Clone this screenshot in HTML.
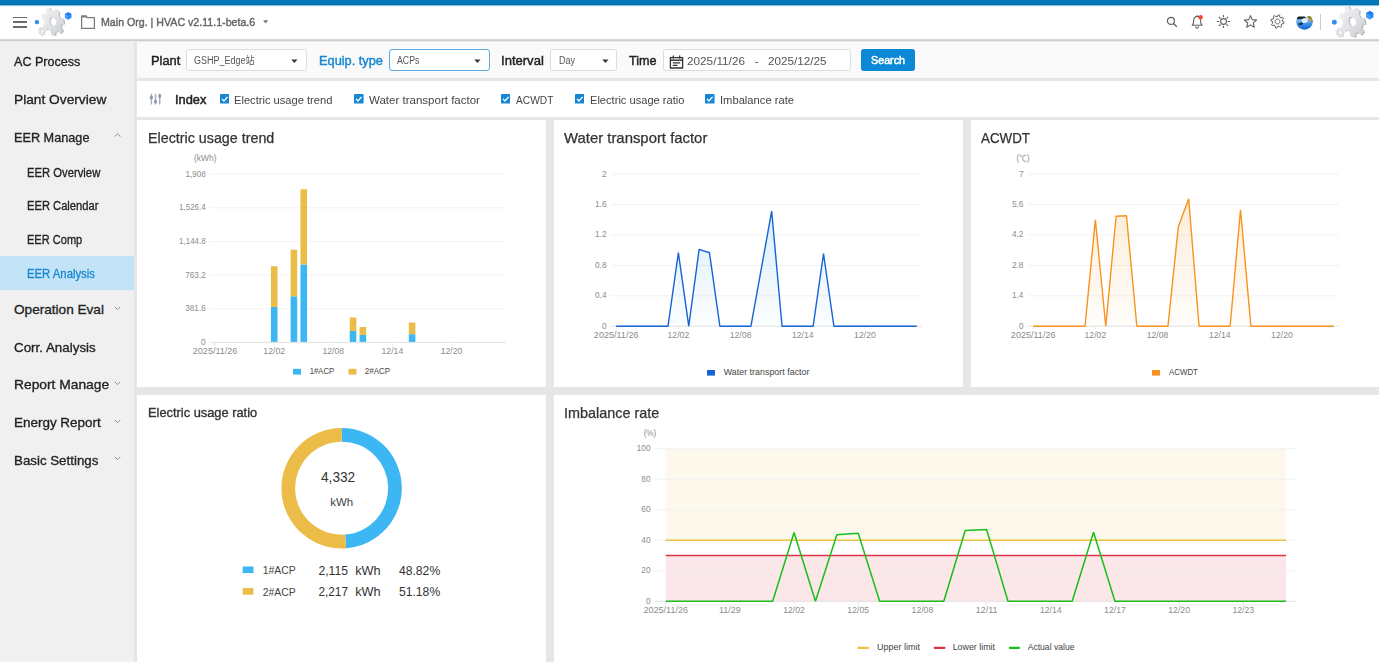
<!DOCTYPE html>
<html lang="en"><head><meta charset="utf-8"><title>HVAC - EER Analysis</title>
<style>
html,body{margin:0;padding:0}
body{width:1379px;height:662px;overflow:hidden;background:#e6e6e6;font-family:"Liberation Sans", "Noto Sans CJK TC", sans-serif;position:relative}
.t{position:absolute;white-space:nowrap;display:block}
svg text{font-family:"Liberation Sans", "Noto Sans CJK TC", sans-serif}
.blue{position:absolute;left:0;top:0;width:1379px;height:5px;background:linear-gradient(#0078b8 0,#0078b8 4px,#0071b0 4px,#0071b0 5px)}
.blue2{position:absolute;left:0;top:5px;width:1379px;height:2px;background:linear-gradient(#8ec3e0 0,#8ec3e0 1px,#f0f6fa 1px,#f0f6fa 2px)}
.hdr{position:absolute;left:0;top:5px;width:1379px;height:34px;background:#fff}
.hdrline{z-index:5;position:absolute;left:0;top:39px;width:1379px;height:3px;background:linear-gradient(#d6d6d6 0,#d6d6d6 1px,#cfcfcf 1px,#cfcfcf 2px,#e9e9e9 2px,#e9e9e9 3px)}
.hamb i{position:absolute;left:13.3px;width:13.8px;height:1.5px;background:#6a6a6a}
.side{position:absolute;left:0;top:41.4px;width:134.2px;height:622px;background:#f0f0f0}
.sel{position:absolute;left:0;width:134.2px;background:#c3e4f6}
.mi{display:contents}
.fbar{position:absolute;left:137.4px;top:41.4px;width:1242px;height:36.2px;background:#fafafa}
.ibar{position:absolute;left:137.4px;top:81px;width:1242px;height:36.1px;background:#fff}
.selbox{position:absolute;top:49px;height:22px;box-sizing:border-box;border:1px solid #dcdcdc;border-radius:3px;background:#fff}
.selbox.focus{border-color:#5aade6}
.btn{position:absolute;top:49px;height:21.5px;border-radius:3px;background:#0b89d6}
.card{position:absolute;background:#fff}
.chart{position:absolute;overflow:visible}
</style></head>
<body>
<div class="blue"></div><header><div class="hdr"></div><div class="blue2"></div><div class="hamb"><i style="top:16.5px"></i><i style="top:21.3px"></i><i style="top:26.2px"></i></div><svg class="logo" style="position:absolute;left:33.1px;top:6.3px" width="40.7" height="31.9" viewBox="0 0 46 36"><defs><linearGradient id="lgA" x1="0" y1="0" x2="1" y2="1"><stop offset="0" stop-color="#f4f4f5"/><stop offset="0.5" stop-color="#e2e3e5"/><stop offset="1" stop-color="#c9cbcf"/></linearGradient></defs><path d="M32.1 14.3 L35.4 14.8 L36.6 20.6 L33.5 21.3 L32.9 24.7 L35.2 28.2 L32.4 31.9 L29.5 29.2 L26.7 30.2 L26.3 34.0 L21.6 32.8 L21.0 28.8 L18.1 26.5 L15.3 27.8 L12.3 22.7 L14.5 20.3 L13.7 16.5 L10.6 14.4 L11.5 9.1 L14.8 10.2 L16.7 7.7 L15.6 3.7 L19.9 2.3 L21.8 6.0 L24.9 6.7 L26.7 3.9 L31.0 7.4 L30.1 10.9Z M26.2 15.6 L25.4 14.7 L24.5 14.0 L23.5 13.6 L22.6 13.5 L21.6 13.7 L20.9 14.2 L20.3 15.0 L19.9 16.0 L19.8 17.2 L20.0 18.4 L20.4 19.5 L21.0 20.6 L21.8 21.5 L22.7 22.2 L23.7 22.6 L24.6 22.7 L25.6 22.5 L26.3 22.0 L26.9 21.2 L27.3 20.2 L27.4 19.0 L27.2 17.8 L26.8 16.7Z" fill="#b4bac0" fill-rule="evenodd"/><path d="M30.8 13.7 L34.1 14.2 L35.3 20.0 L32.2 20.7 L31.6 24.1 L33.9 27.6 L31.1 31.3 L28.2 28.6 L25.4 29.6 L25.0 33.4 L20.3 32.2 L19.7 28.2 L16.8 25.9 L14.0 27.2 L11.0 22.1 L13.2 19.7 L12.4 15.9 L9.3 13.8 L10.2 8.5 L13.5 9.6 L15.4 7.1 L14.3 3.1 L18.6 1.7 L20.5 5.4 L23.6 6.1 L25.4 3.3 L29.7 6.8 L28.8 10.3Z M24.9 15.0 L24.1 14.1 L23.2 13.4 L22.2 13.0 L21.3 12.9 L20.3 13.1 L19.6 13.6 L19.0 14.4 L18.6 15.4 L18.5 16.6 L18.7 17.8 L19.1 18.9 L19.7 20.0 L20.5 20.9 L21.4 21.6 L22.4 22.0 L23.3 22.1 L24.3 21.9 L25.0 21.4 L25.6 20.6 L26.0 19.6 L26.1 18.4 L25.9 17.2 L25.5 16.1Z" fill="url(#lgA)" fill-rule="evenodd"/><path d="M13.2 27.4 L14.2 27.5 L14.5 29.4 L13.6 29.7 L13.4 30.9 L14.0 31.9 L13.1 33.1 L12.2 32.4 L11.2 32.7 L11.0 33.8 L9.4 33.5 L9.2 32.3 L8.2 31.6 L7.4 31.9 L6.4 30.3 L7.0 29.5 L6.8 28.2 L5.9 27.6 L6.2 25.9 L7.2 26.1 L7.9 25.3 L7.6 24.1 L9.0 23.6 L9.6 24.6 L10.7 24.9 L11.3 24.1 L12.8 25.2 L12.5 26.2Z M11.2 27.7 L10.9 27.4 L10.6 27.1 L10.2 27.0 L9.8 27.0 L9.5 27.1 L9.2 27.3 L8.9 27.6 L8.8 27.9 L8.7 28.4 L8.8 28.8 L8.9 29.3 L9.2 29.7 L9.5 30.0 L9.8 30.3 L10.2 30.4 L10.6 30.4 L10.9 30.3 L11.2 30.1 L11.5 29.8 L11.6 29.5 L11.7 29.0 L11.6 28.6 L11.5 28.1Z" fill="#c2c5c9" fill-rule="evenodd"/><path d="M12.7 27.2 L13.7 27.3 L14.0 29.2 L13.1 29.5 L12.9 30.7 L13.5 31.7 L12.6 32.9 L11.7 32.2 L10.7 32.5 L10.5 33.6 L8.9 33.3 L8.7 32.1 L7.7 31.4 L6.9 31.7 L5.9 30.1 L6.5 29.3 L6.3 28.0 L5.4 27.4 L5.7 25.7 L6.7 25.9 L7.4 25.1 L7.1 23.9 L8.5 23.4 L9.1 24.4 L10.2 24.7 L10.8 23.9 L12.3 25.0 L12.0 26.0Z M10.7 27.5 L10.4 27.2 L10.1 26.9 L9.7 26.8 L9.3 26.8 L9.0 26.9 L8.7 27.1 L8.4 27.4 L8.3 27.7 L8.2 28.2 L8.3 28.6 L8.4 29.1 L8.7 29.5 L9.0 29.8 L9.3 30.1 L9.7 30.2 L10.1 30.2 L10.4 30.1 L10.7 29.9 L11.0 29.6 L11.1 29.3 L11.2 28.8 L11.1 28.4 L11.0 27.9Z" fill="#e3e4e6" fill-rule="evenodd"/><path d="M6.7 19.6 L4.4 20.9 L2.1 19.6 L2.1 16.8 L4.4 15.5 L6.7 16.8Z" fill="#2b8cf4"/><path d="M43.5 13.3 L39.8 15.5 L36.1 13.3 L36.1 9.0 L39.8 6.9 L43.5 9.0Z" fill="#2b8cf4"/><path d="M39.8 11.2L36.1 9.05L39.8 6.9L43.5 9.05Z" fill="#1f7df0"/><path d="M39.8 11.2L36.1 9.05V13.35L39.8 15.5Z" fill="#4da0f8"/></svg><svg style="position:absolute;left:80px;top:14px" width="16" height="16" viewBox="0 0 16 16"><path d="M1.6 14.3V2.2h4.6l1 1.5h7.2v10.6z" fill="none" stroke="#7c7c7c" stroke-width="1.25"/><path d="M1.6 1.6h4.9l1 1.9H1.6z" fill="#7c7c7c"/></svg><span class="t " id="t0" style="font-size:11.5px;line-height:15px;top:15.32px;color:#666;-webkit-text-stroke:0.42px #666;left:101.20px;transform:scaleX(0.9243);transform-origin:0 0;">Main Org. | HVAC v2.11.1-beta.6</span><svg style="position:absolute;left:262px;top:19px" width="8" height="6" viewBox="0 0 8 6"><path d="M1 1.2h5.2L3.6 4.4z" fill="#777"/></svg><svg style="position:absolute;left:1166px;top:16px" width="12" height="12" viewBox="0 0 12 12"><circle cx="4.9" cy="4.9" r="3.5" fill="none" stroke="#606060" stroke-width="1.2"/><path d="M7.5 7.5L10.8 10.8" stroke="#606060" stroke-width="1.3"/></svg><svg style="position:absolute;left:1189.5px;top:13.5px" width="15" height="15" viewBox="0 0 15 15"><path d="M2.2 11.2c1.2-1 1.5-2.2 1.5-4.6c0-2.4 1.4-4.2 3.4-4.2s3.4 1.8 3.4 4.2c0 2.4 0.3 3.6 1.5 4.6z" fill="none" stroke="#606060" stroke-width="1.1" stroke-linejoin="round"/><path d="M5.6 12.6a1.5 1.5 0 0 0 3 0" fill="none" stroke="#606060" stroke-width="1.1"/><path d="M7.1 1.2v1.2" stroke="#606060" stroke-width="1.1"/><circle cx="10.6" cy="3.2" r="2.2" fill="#f4452f"/></svg><svg style="position:absolute;left:1215.8px;top:13.7px" width="15" height="15" viewBox="0 0 15 15"><circle cx="7.5" cy="7.5" r="2.9" fill="none" stroke="#606060" stroke-width="1.1"/><path d="M11.70 7.50L14.10 7.50M10.47 10.47L12.17 12.17M7.50 11.70L7.50 14.10M4.53 10.47L2.83 12.17M3.30 7.50L0.90 7.50M4.53 4.53L2.83 2.83M7.50 3.30L7.50 0.90M10.47 4.53L12.17 2.83" stroke="#606060" stroke-width="1.1"/></svg><svg style="position:absolute;left:1242.8px;top:13.6px" width="15" height="15" viewBox="0 0 15 15"><path d="M7.50 1.60 L9.20 5.65 L13.59 6.02 L10.26 8.90 L11.26 13.18 L7.50 10.90 L3.74 13.18 L4.74 8.90 L1.41 6.02 L5.80 5.65Z" fill="none" stroke="#606060" stroke-width="1.1" stroke-linejoin="round"/></svg><svg style="position:absolute;left:1269.7px;top:13.7px" width="15" height="15" viewBox="0 0 15 15"><path d="M12.5 7.5 L14.1 8.1 L13.7 9.8 L12.0 9.7 L11.0 11.0 L11.7 12.6 L10.2 13.5 L9.1 12.2 L7.5 12.5 L6.9 14.1 L5.2 13.7 L5.3 12.0 L4.0 11.0 L2.4 11.7 L1.5 10.2 L2.8 9.1 L2.5 7.5 L0.9 6.9 L1.3 5.2 L3.0 5.3 L4.0 4.0 L3.3 2.4 L4.8 1.5 L5.9 2.8 L7.5 2.5 L8.1 0.9 L9.8 1.3 L9.7 3.0 L11.0 4.0 L12.6 3.3 L13.5 4.8 L12.2 5.9Z M9.8 6.9 L9.6 6.3 L9.2 5.8 L8.7 5.4 L8.1 5.2 L7.5 5.1 L6.9 5.2 L6.3 5.4 L5.8 5.8 L5.4 6.3 L5.2 6.9 L5.1 7.5 L5.2 8.1 L5.4 8.7 L5.8 9.2 L6.3 9.6 L6.9 9.8 L7.5 9.9 L8.1 9.8 L8.7 9.6 L9.2 9.2 L9.6 8.7 L9.8 8.1 L9.9 7.5Z" fill="none" stroke="#606060" stroke-width="1" stroke-linejoin="round"/></svg><svg style="position:absolute;left:1295.6px;top:12.5px" width="17" height="17" viewBox="0 0 17 17"><defs><clipPath id="avc"><circle cx="8.5" cy="8.5" r="8.3"/></clipPath><linearGradient id="avg" x1="0" y1="0" x2="0" y2="1"><stop offset="0" stop-color="#ffffff"/><stop offset="0.2" stop-color="#fdfdfd"/><stop offset="0.3" stop-color="#a9cdf6"/><stop offset="0.62" stop-color="#3f92ea"/><stop offset="1" stop-color="#0d62cc"/></linearGradient><filter id="avb" x="-10%" y="-10%" width="120%" height="120%"><feGaussianBlur stdDeviation="0.45"/></filter></defs><g clip-path="url(#avc)"><rect width="17" height="17" fill="url(#avg)"/><g filter="url(#avb)"><path d="M-1 3.400h9.500l1.500 1.200l-3 1.300l-8 .600z" fill="#16222f"/><path d="M10.500 3.300h7.500v7.200c-1.800-.800-3.600-2.600-5-4.600c-.800-1.100-1.700-1.700-2.500-2.600z" fill="#7c8b2c"/><circle cx="14.600" cy="6.600" r="1.300" fill="#d8952c"/><ellipse cx="8.700" cy="7.600" rx="3" ry="2.300" fill="#f2f7fe" opacity=".9"/><path d="M2 10.900c1.200-.500 2-.400 2.600-.900l.500-.800l.700 .900c.500 .200 .900 .300 1.200 .700c-.600 .700-1.300 .900-2 1l-.400 .700l-.600-.700c-.800-.100-1.500-.400-2-.900z" fill="#121c29"/></g></g></svg><div style="position:absolute;left:1320.4px;top:14px;width:1px;height:16px;background:#ccc"></div><svg class="logo2" style="position:absolute;left:1330px;top:4px" width="46" height="36" viewBox="0 0 46 36"><defs><linearGradient id="lgA" x1="0" y1="0" x2="1" y2="1"><stop offset="0" stop-color="#f4f4f5"/><stop offset="0.5" stop-color="#e2e3e5"/><stop offset="1" stop-color="#c9cbcf"/></linearGradient></defs><path d="M32.1 14.3 L35.4 14.8 L36.6 20.6 L33.5 21.3 L32.9 24.7 L35.2 28.2 L32.4 31.9 L29.5 29.2 L26.7 30.2 L26.3 34.0 L21.6 32.8 L21.0 28.8 L18.1 26.5 L15.3 27.8 L12.3 22.7 L14.5 20.3 L13.7 16.5 L10.6 14.4 L11.5 9.1 L14.8 10.2 L16.7 7.7 L15.6 3.7 L19.9 2.3 L21.8 6.0 L24.9 6.7 L26.7 3.9 L31.0 7.4 L30.1 10.9Z M26.2 15.6 L25.4 14.7 L24.5 14.0 L23.5 13.6 L22.6 13.5 L21.6 13.7 L20.9 14.2 L20.3 15.0 L19.9 16.0 L19.8 17.2 L20.0 18.4 L20.4 19.5 L21.0 20.6 L21.8 21.5 L22.7 22.2 L23.7 22.6 L24.6 22.7 L25.6 22.5 L26.3 22.0 L26.9 21.2 L27.3 20.2 L27.4 19.0 L27.2 17.8 L26.8 16.7Z" fill="#b4bac0" fill-rule="evenodd"/><path d="M30.8 13.7 L34.1 14.2 L35.3 20.0 L32.2 20.7 L31.6 24.1 L33.9 27.6 L31.1 31.3 L28.2 28.6 L25.4 29.6 L25.0 33.4 L20.3 32.2 L19.7 28.2 L16.8 25.9 L14.0 27.2 L11.0 22.1 L13.2 19.7 L12.4 15.9 L9.3 13.8 L10.2 8.5 L13.5 9.6 L15.4 7.1 L14.3 3.1 L18.6 1.7 L20.5 5.4 L23.6 6.1 L25.4 3.3 L29.7 6.8 L28.8 10.3Z M24.9 15.0 L24.1 14.1 L23.2 13.4 L22.2 13.0 L21.3 12.9 L20.3 13.1 L19.6 13.6 L19.0 14.4 L18.6 15.4 L18.5 16.6 L18.7 17.8 L19.1 18.9 L19.7 20.0 L20.5 20.9 L21.4 21.6 L22.4 22.0 L23.3 22.1 L24.3 21.9 L25.0 21.4 L25.6 20.6 L26.0 19.6 L26.1 18.4 L25.9 17.2 L25.5 16.1Z" fill="url(#lgA)" fill-rule="evenodd"/><path d="M13.2 27.4 L14.2 27.5 L14.5 29.4 L13.6 29.7 L13.4 30.9 L14.0 31.9 L13.1 33.1 L12.2 32.4 L11.2 32.7 L11.0 33.8 L9.4 33.5 L9.2 32.3 L8.2 31.6 L7.4 31.9 L6.4 30.3 L7.0 29.5 L6.8 28.2 L5.9 27.6 L6.2 25.9 L7.2 26.1 L7.9 25.3 L7.6 24.1 L9.0 23.6 L9.6 24.6 L10.7 24.9 L11.3 24.1 L12.8 25.2 L12.5 26.2Z M11.2 27.7 L10.9 27.4 L10.6 27.1 L10.2 27.0 L9.8 27.0 L9.5 27.1 L9.2 27.3 L8.9 27.6 L8.8 27.9 L8.7 28.4 L8.8 28.8 L8.9 29.3 L9.2 29.7 L9.5 30.0 L9.8 30.3 L10.2 30.4 L10.6 30.4 L10.9 30.3 L11.2 30.1 L11.5 29.8 L11.6 29.5 L11.7 29.0 L11.6 28.6 L11.5 28.1Z" fill="#c2c5c9" fill-rule="evenodd"/><path d="M12.7 27.2 L13.7 27.3 L14.0 29.2 L13.1 29.5 L12.9 30.7 L13.5 31.7 L12.6 32.9 L11.7 32.2 L10.7 32.5 L10.5 33.6 L8.9 33.3 L8.7 32.1 L7.7 31.4 L6.9 31.7 L5.9 30.1 L6.5 29.3 L6.3 28.0 L5.4 27.4 L5.7 25.7 L6.7 25.9 L7.4 25.1 L7.1 23.9 L8.5 23.4 L9.1 24.4 L10.2 24.7 L10.8 23.9 L12.3 25.0 L12.0 26.0Z M10.7 27.5 L10.4 27.2 L10.1 26.9 L9.7 26.8 L9.3 26.8 L9.0 26.9 L8.7 27.1 L8.4 27.4 L8.3 27.7 L8.2 28.2 L8.3 28.6 L8.4 29.1 L8.7 29.5 L9.0 29.8 L9.3 30.1 L9.7 30.2 L10.1 30.2 L10.4 30.1 L10.7 29.9 L11.0 29.6 L11.1 29.3 L11.2 28.8 L11.1 28.4 L11.0 27.9Z" fill="#e3e4e6" fill-rule="evenodd"/><path d="M6.7 19.6 L4.4 20.9 L2.1 19.6 L2.1 16.8 L4.4 15.5 L6.7 16.8Z" fill="#2b8cf4"/><path d="M43.5 13.3 L39.8 15.5 L36.1 13.3 L36.1 9.0 L39.8 6.9 L43.5 9.0Z" fill="#2b8cf4"/><path d="M39.8 11.2L36.1 9.05L39.8 6.9L43.5 9.05Z" fill="#1f7df0"/><path d="M39.8 11.2L36.1 9.05V13.35L39.8 15.5Z" fill="#4da0f8"/></svg></header><div class="hdrline"></div><nav><div class="side"></div><div class="sel" style="top:256px;height:33.5px"></div><a class="mi"><span class="t " id="t1" style="font-size:13.6px;line-height:18px;top:53.21px;color:#222;-webkit-text-stroke:0.32px #222;left:14.00px;transform:scaleX(0.9249);transform-origin:0 0;">AC Process</span></a><a class="mi"><span class="t " id="t2" style="font-size:13.6px;line-height:18px;top:90.81px;color:#222;-webkit-text-stroke:0.32px #222;left:14.00px;transform:scaleX(1.0098);transform-origin:0 0;">Plant Overview</span></a><a class="mi"><span class="t " id="t3" style="font-size:13.6px;line-height:18px;top:128.51px;color:#222;-webkit-text-stroke:0.32px #222;left:14.00px;transform:scaleX(0.9332);transform-origin:0 0;">EER Manage</span></a><svg style="position:absolute;left:113.7px;top:133.1px" width="7" height="4.4" viewBox="0 0 7 4.4"><path d="M0.7 3.6L3.5 0.8L6.3 3.6" fill="none" stroke="#8c8c8c" stroke-width="1"/></svg><a class="mi"><span class="t " id="t4" style="font-size:13.6px;line-height:18px;top:301.01px;color:#222;-webkit-text-stroke:0.32px #222;left:14.00px;">Operation Eval</span></a><svg style="position:absolute;left:113.7px;top:305.6px" width="7" height="4.4" viewBox="0 0 7 4.4"><path d="M0.7 0.8L3.5 3.6L6.3 0.8" fill="none" stroke="#8c8c8c" stroke-width="1"/></svg><a class="mi"><span class="t " id="t5" style="font-size:13.6px;line-height:18px;top:338.71px;color:#222;-webkit-text-stroke:0.32px #222;left:14.00px;transform:scaleX(0.9837);transform-origin:0 0;">Corr. Analysis</span></a><a class="mi"><span class="t " id="t6" style="font-size:13.6px;line-height:18px;top:376.31px;color:#222;-webkit-text-stroke:0.32px #222;left:14.00px;transform:scaleX(1.0144);transform-origin:0 0;">Report Manage</span></a><svg style="position:absolute;left:113.7px;top:380.9px" width="7" height="4.4" viewBox="0 0 7 4.4"><path d="M0.7 0.8L3.5 3.6L6.3 0.8" fill="none" stroke="#8c8c8c" stroke-width="1"/></svg><a class="mi"><span class="t " id="t7" style="font-size:13.6px;line-height:18px;top:413.91px;color:#222;-webkit-text-stroke:0.32px #222;left:14.00px;transform:scaleX(0.9898);transform-origin:0 0;">Energy Report</span></a><svg style="position:absolute;left:113.7px;top:418.5px" width="7" height="4.4" viewBox="0 0 7 4.4"><path d="M0.7 0.8L3.5 3.6L6.3 0.8" fill="none" stroke="#8c8c8c" stroke-width="1"/></svg><a class="mi"><span class="t " id="t8" style="font-size:13.6px;line-height:18px;top:451.51px;color:#222;-webkit-text-stroke:0.32px #222;left:14.00px;transform:scaleX(0.9791);transform-origin:0 0;">Basic Settings</span></a><svg style="position:absolute;left:113.7px;top:456.1px" width="7" height="4.4" viewBox="0 0 7 4.4"><path d="M0.7 0.8L3.5 3.6L6.3 0.8" fill="none" stroke="#8c8c8c" stroke-width="1"/></svg><a class="mi"><span class="t " id="t9" style="font-size:12.3px;line-height:16px;top:164.80px;color:#222;-webkit-text-stroke:0.3px #222;left:26.80px;transform:scaleX(0.9164);transform-origin:0 0;">EER Overview</span></a><a class="mi"><span class="t " id="t10" style="font-size:12.3px;line-height:16px;top:198.30px;color:#222;-webkit-text-stroke:0.3px #222;left:26.80px;transform:scaleX(0.9086);transform-origin:0 0;">EER Calendar</span></a><a class="mi"><span class="t " id="t11" style="font-size:12.3px;line-height:16px;top:231.90px;color:#222;-webkit-text-stroke:0.3px #222;left:26.80px;transform:scaleX(0.8979);transform-origin:0 0;">EER Comp</span></a><a class="mi"><span class="t " id="t12" style="font-size:12.3px;line-height:16px;top:265.50px;color:#1787d3;-webkit-text-stroke:0.3px #1787d3;left:26.80px;transform:scaleX(0.9206);transform-origin:0 0;">EER Analysis</span></a></nav><section><div class="fbar"></div><span class="t " id="t13" style="font-size:13.6px;line-height:18px;top:51.71px;color:#222;-webkit-text-stroke:0.45px #222;left:150.80px;transform:scaleX(0.9442);transform-origin:0 0;">Plant</span><div class="selbox" style="left:186.3px;width:121.0px"></div><span class="t " id="t14" style="font-size:10px;line-height:13px;top:53.60px;color:#555;left:193.80px;transform:scaleX(0.9002);transform-origin:0 0;">GSHP_Edge站</span><svg style="position:absolute;left:291.0px;top:58.6px" width="7" height="4.5" viewBox="0 0 7 4.5"><path d="M0.3 0.5h6.2L3.4 4z" fill="#333"/></svg><span class="t " id="t15" style="font-size:13.6px;line-height:18px;top:51.71px;color:#1787d3;-webkit-text-stroke:0.45px #1787d3;left:319.00px;transform:scaleX(0.9404);transform-origin:0 0;">Equip. type</span><div class="selbox focus" style="left:389.0px;width:100.8px"></div><span class="t " id="t16" style="font-size:10px;line-height:13px;top:53.60px;color:#555;left:396.80px;transform:scaleX(0.8761);transform-origin:0 0;">ACPs</span><svg style="position:absolute;left:473.6px;top:58.6px" width="7" height="4.5" viewBox="0 0 7 4.5"><path d="M0.3 0.5h6.2L3.4 4z" fill="#333"/></svg><span class="t " id="t17" style="font-size:13.6px;line-height:18px;top:51.71px;color:#222;-webkit-text-stroke:0.45px #222;left:500.80px;transform:scaleX(0.9602);transform-origin:0 0;">Interval</span><div class="selbox" style="left:550.3px;width:67.2px"></div><span class="t " id="t18" style="font-size:10px;line-height:13px;top:53.60px;color:#555;left:559.20px;transform:scaleX(0.9012);transform-origin:0 0;">Day</span><svg style="position:absolute;left:602.0px;top:58.6px" width="7" height="4.5" viewBox="0 0 7 4.5"><path d="M0.3 0.5h6.2L3.4 4z" fill="#333"/></svg><span class="t " id="t19" style="font-size:13.6px;line-height:18px;top:51.71px;color:#222;-webkit-text-stroke:0.45px #222;left:629.20px;transform:scaleX(0.9282);transform-origin:0 0;">Time</span><div class="selbox" style="left:663.3px;width:187.8px"></div><svg style="position:absolute;left:668.5px;top:54.5px" width="15" height="14" viewBox="0 0 15 14"><path d="M1.4 2.6h12.2v10.4H1.4z" fill="none" stroke="#333" stroke-width="1.3"/><path d="M1.4 5.2h12.2" stroke="#333" stroke-width="1.5"/><path d="M4.3 0.6v3M10.7 0.6v3" stroke="#333" stroke-width="1.3"/><path d="M3.8 7.8h7.4M3.8 10.3h4.6" stroke="#333" stroke-width="1.2"/></svg><span class="t " id="t20" style="font-size:11.4px;line-height:15px;top:53.60px;color:#555;left:687.00px;transform:scaleX(1.0321);transform-origin:0 0;">2025/11/26</span><span class="t " id="t21" style="font-size:11.4px;line-height:15px;top:53.60px;color:#555;left:754.80px;">-</span><span class="t " id="t22" style="font-size:11.4px;line-height:15px;top:53.60px;color:#555;left:768.20px;transform:scaleX(1.0238);transform-origin:0 0;">2025/12/25</span><div class="btn" style="left:861.2px;width:53.8px"></div><span class="t " id="t23" style="font-size:11.6px;line-height:15px;top:52.31px;color:#fff;-webkit-text-stroke:0.55px #fff;left:870.80px;transform:scaleX(0.9270);transform-origin:0 0;">Search</span></section><section><div class="ibar"></div><svg style="position:absolute;left:148.6px;top:93px" width="13" height="12" viewBox="0 0 13 12"><path d="M2.4 0.8v10.7M6.5 0.8v10.7M10.7 0.8v10.7" stroke="#a7aec0" stroke-width="1.5" fill="none"/><g fill="#8d96ab"><ellipse cx="2.4" cy="4.6" rx="1.6" ry="1.8"/><ellipse cx="6.5" cy="8.8" rx="1.6" ry="1.8"/><ellipse cx="10.7" cy="3.1" rx="1.6" ry="1.8"/></g></svg><span class="t " id="t24" style="font-size:13.2px;line-height:17px;top:91.00px;color:#222;-webkit-text-stroke:0.5px #222;left:175.00px;transform:scaleX(0.9730);transform-origin:0 0;">Index</span><svg class="cb" style="position:absolute;left:219.7px;top:94.2px" width="9.6" height="9.6" viewBox="0 0 10 10"><rect width="10" height="10" rx="1" fill="#1787d3"/><path d="M2.1 5.1l2 2.1l3.8-4.2" fill="none" stroke="#fff" stroke-width="1.4"/></svg><span class="t " id="t25" style="font-size:11.8px;line-height:15px;top:92.61px;color:#444;left:234.20px;transform:scaleX(0.9436);transform-origin:0 0;">Electric usage trend</span><svg class="cb" style="position:absolute;left:354.0px;top:94.2px" width="9.6" height="9.6" viewBox="0 0 10 10"><rect width="10" height="10" rx="1" fill="#1787d3"/><path d="M2.1 5.1l2 2.1l3.8-4.2" fill="none" stroke="#fff" stroke-width="1.4"/></svg><span class="t " id="t26" style="font-size:11.8px;line-height:15px;top:92.61px;color:#444;left:369.00px;transform:scaleX(0.9763);transform-origin:0 0;">Water transport factor</span><svg class="cb" style="position:absolute;left:500.8px;top:94.2px" width="9.6" height="9.6" viewBox="0 0 10 10"><rect width="10" height="10" rx="1" fill="#1787d3"/><path d="M2.1 5.1l2 2.1l3.8-4.2" fill="none" stroke="#fff" stroke-width="1.4"/></svg><span class="t " id="t27" style="font-size:11.8px;line-height:15px;top:92.61px;color:#444;left:515.80px;transform:scaleX(0.8637);transform-origin:0 0;">ACWDT</span><svg class="cb" style="position:absolute;left:574.8px;top:94.2px" width="9.6" height="9.6" viewBox="0 0 10 10"><rect width="10" height="10" rx="1" fill="#1787d3"/><path d="M2.1 5.1l2 2.1l3.8-4.2" fill="none" stroke="#fff" stroke-width="1.4"/></svg><span class="t " id="t28" style="font-size:11.8px;line-height:15px;top:92.61px;color:#444;left:590.00px;transform:scaleX(0.9414);transform-origin:0 0;">Electric usage ratio</span><svg class="cb" style="position:absolute;left:705.0px;top:94.2px" width="9.6" height="9.6" viewBox="0 0 10 10"><rect width="10" height="10" rx="1" fill="#1787d3"/><path d="M2.1 5.1l2 2.1l3.8-4.2" fill="none" stroke="#fff" stroke-width="1.4"/></svg><span class="t " id="t29" style="font-size:11.8px;line-height:15px;top:92.61px;color:#444;left:720.00px;transform:scaleX(0.9481);transform-origin:0 0;">Imbalance rate</span></section><section><div class="card" style="left:137.00px;top:120.00px;width:408.70px;height:266.50px"></div><span class="t " id="t30" style="font-size:14.2px;line-height:18px;top:129.32px;color:#333;-webkit-text-stroke:0.25px #333;left:148.00px;transform:scaleX(1.0072);transform-origin:0 0;">Electric usage trend</span><svg class="chart" style="left:137.00px;top:120.00px" width="408.70" height="266.50" viewBox="137.00 120.00 408.70 266.50"><text x="205.70" y="344.80" font-size="8.3" fill="#8c8c8c" text-anchor="end">0</text><line x1="210.20" x2="505.70" y1="308.76" y2="308.76" stroke="#f2f2f2" stroke-width="1"/><text x="205.70" y="311.16" font-size="8.3" fill="#8c8c8c" text-anchor="end" textLength="20.40" lengthAdjust="spacingAndGlyphs">381.6</text><line x1="210.20" x2="505.70" y1="275.12" y2="275.12" stroke="#f2f2f2" stroke-width="1"/><text x="205.70" y="277.52" font-size="8.3" fill="#8c8c8c" text-anchor="end" textLength="20.40" lengthAdjust="spacingAndGlyphs">763.2</text><line x1="210.20" x2="505.70" y1="241.48" y2="241.48" stroke="#f2f2f2" stroke-width="1"/><text x="205.70" y="243.88" font-size="8.3" fill="#8c8c8c" text-anchor="end" textLength="26.60" lengthAdjust="spacingAndGlyphs">1,144.8</text><line x1="210.20" x2="505.70" y1="207.84" y2="207.84" stroke="#f2f2f2" stroke-width="1"/><text x="205.70" y="210.24" font-size="8.3" fill="#8c8c8c" text-anchor="end" textLength="26.60" lengthAdjust="spacingAndGlyphs">1,526.4</text><line x1="210.20" x2="505.70" y1="174.20" y2="174.20" stroke="#f2f2f2" stroke-width="1"/><text x="205.70" y="176.60" font-size="8.3" fill="#8c8c8c" text-anchor="end" textLength="20.20" lengthAdjust="spacingAndGlyphs">1,908</text><line x1="210.20" x2="505.70" y1="342.40" y2="342.40" stroke="#e2e2e2" stroke-width="1"/><line x1="215.12" x2="215.12" y1="342.40" y2="345.40" stroke="#e6e6e6" stroke-width="1"/><text x="215.12" y="354.30" font-size="8.3" fill="#8c8c8c" text-anchor="middle" textLength="44.60" lengthAdjust="spacingAndGlyphs">2025/11/26</text><line x1="274.22" x2="274.22" y1="342.40" y2="345.40" stroke="#e6e6e6" stroke-width="1"/><text x="274.22" y="354.30" font-size="8.3" fill="#8c8c8c" text-anchor="middle" textLength="21.70" lengthAdjust="spacingAndGlyphs">12/02</text><line x1="333.32" x2="333.32" y1="342.40" y2="345.40" stroke="#e6e6e6" stroke-width="1"/><text x="333.32" y="354.30" font-size="8.3" fill="#8c8c8c" text-anchor="middle" textLength="21.70" lengthAdjust="spacingAndGlyphs">12/08</text><line x1="392.42" x2="392.42" y1="342.40" y2="345.40" stroke="#e6e6e6" stroke-width="1"/><text x="392.42" y="354.30" font-size="8.3" fill="#8c8c8c" text-anchor="middle" textLength="21.70" lengthAdjust="spacingAndGlyphs">12/14</text><line x1="451.52" x2="451.52" y1="342.40" y2="345.40" stroke="#e6e6e6" stroke-width="1"/><text x="451.52" y="354.30" font-size="8.3" fill="#8c8c8c" text-anchor="middle" textLength="21.70" lengthAdjust="spacingAndGlyphs">12/20</text><text x="205.20" y="161.40" font-size="8.3" fill="#8c8c8c" text-anchor="middle" textLength="22.50" lengthAdjust="spacingAndGlyphs">(kWh)</text><rect x="270.92" y="307.00" width="6.6" height="34.90" fill="#3db7f4"/><rect x="270.92" y="266.20" width="6.6" height="40.80" fill="#ebbd48"/><rect x="290.62" y="296.30" width="6.6" height="45.60" fill="#3db7f4"/><rect x="290.62" y="249.70" width="6.6" height="46.60" fill="#ebbd48"/><rect x="300.47" y="264.50" width="6.6" height="77.40" fill="#3db7f4"/><rect x="300.47" y="189.20" width="6.6" height="75.30" fill="#ebbd48"/><rect x="349.72" y="331.00" width="6.6" height="10.90" fill="#3db7f4"/><rect x="349.72" y="317.50" width="6.6" height="13.50" fill="#ebbd48"/><rect x="359.57" y="335.00" width="6.6" height="6.90" fill="#3db7f4"/><rect x="359.57" y="327.00" width="6.6" height="8.00" fill="#ebbd48"/><rect x="408.82" y="334.20" width="6.6" height="7.70" fill="#3db7f4"/><rect x="408.82" y="322.50" width="6.6" height="11.70" fill="#ebbd48"/><rect x="293" y="368.8" width="8" height="5.8" fill="#3db7f4"/><text x="309.70" y="374.00" font-size="8.2" fill="#444" textLength="24.60" lengthAdjust="spacingAndGlyphs">1#ACP</text><rect x="348.5" y="368.8" width="8" height="5.8" fill="#ebbd48"/><text x="364.70" y="374.00" font-size="8.2" fill="#444" textLength="25.50" lengthAdjust="spacingAndGlyphs">2#ACP</text></svg></section><section><div class="card" style="left:554.00px;top:120.00px;width:408.60px;height:266.50px"></div><span class="t " id="t31" style="font-size:14.2px;line-height:18px;top:129.32px;color:#333;-webkit-text-stroke:0.25px #333;left:564.20px;transform:scaleX(1.0489);transform-origin:0 0;">Water transport factor</span><svg class="chart" style="left:554.00px;top:120.00px" width="408.60" height="266.50" viewBox="554.00 120.00 408.60 266.50"><defs><linearGradient id="g2" x1="0" y1="0" x2="0" y2="1"><stop offset="0" stop-color="#45aaf2" stop-opacity="0.2"/><stop offset="1" stop-color="#45aaf2" stop-opacity="0.02"/></linearGradient></defs><text x="606.50" y="328.60" font-size="8.3" fill="#8c8c8c" text-anchor="end">0</text><line x1="611.00" x2="922.00" y1="295.80" y2="295.80" stroke="#f2f2f2" stroke-width="1"/><text x="606.50" y="298.20" font-size="8.3" fill="#8c8c8c" text-anchor="end">0.4</text><line x1="611.00" x2="922.00" y1="265.40" y2="265.40" stroke="#f2f2f2" stroke-width="1"/><text x="606.50" y="267.80" font-size="8.3" fill="#8c8c8c" text-anchor="end">0.8</text><line x1="611.00" x2="922.00" y1="235.00" y2="235.00" stroke="#f2f2f2" stroke-width="1"/><text x="606.50" y="237.40" font-size="8.3" fill="#8c8c8c" text-anchor="end">1.2</text><line x1="611.00" x2="922.00" y1="204.60" y2="204.60" stroke="#f2f2f2" stroke-width="1"/><text x="606.50" y="207.00" font-size="8.3" fill="#8c8c8c" text-anchor="end">1.6</text><line x1="611.00" x2="922.00" y1="174.20" y2="174.20" stroke="#f2f2f2" stroke-width="1"/><text x="606.50" y="176.60" font-size="8.3" fill="#8c8c8c" text-anchor="end">2</text><line x1="611.00" x2="922.00" y1="326.20" y2="326.20" stroke="#e2e2e2" stroke-width="1"/><line x1="616.18" x2="616.18" y1="326.20" y2="329.20" stroke="#e6e6e6" stroke-width="1"/><text x="616.18" y="338.10" font-size="8.3" fill="#8c8c8c" text-anchor="middle" textLength="44.60" lengthAdjust="spacingAndGlyphs">2025/11/26</text><line x1="678.38" x2="678.38" y1="326.20" y2="329.20" stroke="#e6e6e6" stroke-width="1"/><text x="678.38" y="338.10" font-size="8.3" fill="#8c8c8c" text-anchor="middle" textLength="21.70" lengthAdjust="spacingAndGlyphs">12/02</text><line x1="740.58" x2="740.58" y1="326.20" y2="329.20" stroke="#e6e6e6" stroke-width="1"/><text x="740.58" y="338.10" font-size="8.3" fill="#8c8c8c" text-anchor="middle" textLength="21.70" lengthAdjust="spacingAndGlyphs">12/08</text><line x1="802.78" x2="802.78" y1="326.20" y2="329.20" stroke="#e6e6e6" stroke-width="1"/><text x="802.78" y="338.10" font-size="8.3" fill="#8c8c8c" text-anchor="middle" textLength="21.70" lengthAdjust="spacingAndGlyphs">12/14</text><line x1="864.98" x2="864.98" y1="326.20" y2="329.20" stroke="#e6e6e6" stroke-width="1"/><text x="864.98" y="338.10" font-size="8.3" fill="#8c8c8c" text-anchor="middle" textLength="21.70" lengthAdjust="spacingAndGlyphs">12/20</text><path d="M616.18 326.20 L626.55 326.20 L636.92 326.20 L647.28 326.20 L657.65 326.20 L668.02 326.20 L678.38 252.71 L688.75 326.20 L699.12 249.44 L709.48 252.71 L719.85 326.20 L730.22 326.20 L740.58 326.20 L750.95 326.20 L761.32 268.67 L771.68 211.06 L782.05 326.20 L792.42 326.20 L802.78 326.20 L813.15 326.20 L823.52 253.70 L833.88 326.20 L844.25 326.20 L854.62 326.20 L864.98 326.20 L875.35 326.20 L885.72 326.20 L896.08 326.20 L906.45 326.20 L916.82 326.20 L916.82 326.20 L616.18 326.20 Z" fill="url(#g2)"/><path d="M616.18 326.20 L626.55 326.20 L636.92 326.20 L647.28 326.20 L657.65 326.20 L668.02 326.20 L678.38 252.71 L688.75 326.20 L699.12 249.44 L709.48 252.71 L719.85 326.20 L730.22 326.20 L740.58 326.20 L750.95 326.20 L761.32 268.67 L771.68 211.06 L782.05 326.20 L792.42 326.20 L802.78 326.20 L813.15 326.20 L823.52 253.70 L833.88 326.20 L844.25 326.20 L854.62 326.20 L864.98 326.20 L875.35 326.20 L885.72 326.20 L896.08 326.20 L906.45 326.20 L916.82 326.20" fill="none" stroke="#1764d4" stroke-width="1.4" stroke-linejoin="bevel"/><rect x="707" y="370" width="8" height="5.6" fill="#1764d4"/><text x="723.70" y="374.60" font-size="8.2" fill="#444" textLength="85.80" lengthAdjust="spacingAndGlyphs">Water transport factor</text></svg></section><section><div class="card" style="left:971.00px;top:120.00px;width:408.00px;height:266.50px"></div><span class="t " id="t32" style="font-size:14.2px;line-height:18px;top:129.32px;color:#333;-webkit-text-stroke:0.25px #333;left:981.20px;transform:scaleX(0.9405);transform-origin:0 0;">ACWDT</span><svg class="chart" style="left:971.00px;top:120.00px" width="408.00" height="266.50" viewBox="971.00 120.00 408.00 266.50"><defs><linearGradient id="g3" x1="0" y1="0" x2="0" y2="1"><stop offset="0" stop-color="#f7a23a" stop-opacity="0.2"/><stop offset="1" stop-color="#f7a23a" stop-opacity="0.02"/></linearGradient></defs><text x="1023.50" y="328.60" font-size="8.3" fill="#8c8c8c" text-anchor="end">0</text><line x1="1028.00" x2="1339.00" y1="295.80" y2="295.80" stroke="#f2f2f2" stroke-width="1"/><text x="1023.50" y="298.20" font-size="8.3" fill="#8c8c8c" text-anchor="end">1.4</text><line x1="1028.00" x2="1339.00" y1="265.40" y2="265.40" stroke="#f2f2f2" stroke-width="1"/><text x="1023.50" y="267.80" font-size="8.3" fill="#8c8c8c" text-anchor="end">2.8</text><line x1="1028.00" x2="1339.00" y1="235.00" y2="235.00" stroke="#f2f2f2" stroke-width="1"/><text x="1023.50" y="237.40" font-size="8.3" fill="#8c8c8c" text-anchor="end">4.2</text><line x1="1028.00" x2="1339.00" y1="204.60" y2="204.60" stroke="#f2f2f2" stroke-width="1"/><text x="1023.50" y="207.00" font-size="8.3" fill="#8c8c8c" text-anchor="end">5.6</text><line x1="1028.00" x2="1339.00" y1="174.20" y2="174.20" stroke="#f2f2f2" stroke-width="1"/><text x="1023.50" y="176.60" font-size="8.3" fill="#8c8c8c" text-anchor="end">7</text><line x1="1028.00" x2="1339.00" y1="326.20" y2="326.20" stroke="#e2e2e2" stroke-width="1"/><line x1="1033.18" x2="1033.18" y1="326.20" y2="329.20" stroke="#e6e6e6" stroke-width="1"/><text x="1033.18" y="338.10" font-size="8.3" fill="#8c8c8c" text-anchor="middle" textLength="44.60" lengthAdjust="spacingAndGlyphs">2025/11/26</text><line x1="1095.38" x2="1095.38" y1="326.20" y2="329.20" stroke="#e6e6e6" stroke-width="1"/><text x="1095.38" y="338.10" font-size="8.3" fill="#8c8c8c" text-anchor="middle" textLength="21.70" lengthAdjust="spacingAndGlyphs">12/02</text><line x1="1157.58" x2="1157.58" y1="326.20" y2="329.20" stroke="#e6e6e6" stroke-width="1"/><text x="1157.58" y="338.10" font-size="8.3" fill="#8c8c8c" text-anchor="middle" textLength="21.70" lengthAdjust="spacingAndGlyphs">12/08</text><line x1="1219.78" x2="1219.78" y1="326.20" y2="329.20" stroke="#e6e6e6" stroke-width="1"/><text x="1219.78" y="338.10" font-size="8.3" fill="#8c8c8c" text-anchor="middle" textLength="21.70" lengthAdjust="spacingAndGlyphs">12/14</text><line x1="1281.98" x2="1281.98" y1="326.20" y2="329.20" stroke="#e6e6e6" stroke-width="1"/><text x="1281.98" y="338.10" font-size="8.3" fill="#8c8c8c" text-anchor="middle" textLength="21.70" lengthAdjust="spacingAndGlyphs">12/20</text><text x="1023.00" y="161.40" font-size="8.3" fill="#8c8c8c" text-anchor="middle" textLength="13.00" lengthAdjust="spacingAndGlyphs">(℃)</text><path d="M1033.18 326.20 L1043.55 326.20 L1053.92 326.20 L1064.28 326.20 L1074.65 326.20 L1085.02 326.20 L1095.38 219.70 L1105.75 326.20 L1116.12 216.20 L1126.48 215.70 L1136.85 326.20 L1147.22 326.20 L1157.58 326.20 L1167.95 326.20 L1178.32 226.70 L1188.68 198.70 L1199.05 326.20 L1209.42 326.20 L1219.78 326.20 L1230.15 326.20 L1240.52 209.70 L1250.88 326.20 L1261.25 326.20 L1271.62 326.20 L1281.98 326.20 L1292.35 326.20 L1302.72 326.20 L1313.08 326.20 L1323.45 326.20 L1333.82 326.20 L1333.82 326.20 L1033.18 326.20 Z" fill="url(#g3)"/><path d="M1033.18 326.20 L1043.55 326.20 L1053.92 326.20 L1064.28 326.20 L1074.65 326.20 L1085.02 326.20 L1095.38 219.70 L1105.75 326.20 L1116.12 216.20 L1126.48 215.70 L1136.85 326.20 L1147.22 326.20 L1157.58 326.20 L1167.95 326.20 L1178.32 226.70 L1188.68 198.70 L1199.05 326.20 L1209.42 326.20 L1219.78 326.20 L1230.15 326.20 L1240.52 209.70 L1250.88 326.20 L1261.25 326.20 L1271.62 326.20 L1281.98 326.20 L1292.35 326.20 L1302.72 326.20 L1313.08 326.20 L1323.45 326.20 L1333.82 326.20" fill="none" stroke="#f7931e" stroke-width="1.4" stroke-linejoin="bevel"/><rect x="1152" y="370" width="8" height="5.6" fill="#f7931e"/><text x="1169.00" y="374.60" font-size="8.2" fill="#444" textLength="28.90" lengthAdjust="spacingAndGlyphs">ACWDT</text></svg></section><section><div class="card" style="left:137.00px;top:395.00px;width:408.70px;height:269.00px"></div><span class="t " id="t33" style="font-size:12.9px;line-height:17px;top:404.01px;color:#333;-webkit-text-stroke:0.35px #333;left:148.00px;transform:scaleX(0.9959);transform-origin:0 0;">Electric usage ratio</span><svg class="chart" style="left:137.00px;top:395.00px" width="408.70" height="269.00" viewBox="137.00 395.00 408.70 269.00"><path d="M341.70 428.00 A60.20 60.20 0 0 1 346.16 548.23 L345.14 534.57 A46.50 46.50 0 0 0 341.70 441.70 Z" fill="#3db7f4"/><path d="M346.16 548.23 A60.20 60.20 0 1 1 341.70 428.00 L341.70 441.70 A46.50 46.50 0 1 0 345.14 534.57 Z" fill="#ebbd48"/><text x="321.00" y="481.70" font-size="14.4" fill="#333" textLength="34.20" lengthAdjust="spacingAndGlyphs">4,332</text><text x="330.20" y="506.30" font-size="11" fill="#444" textLength="23.00" lengthAdjust="spacingAndGlyphs">kWh</text><rect x="242.7" y="566.50" width="10.8" height="6.6" fill="#3db7f4"/><text x="262.70" y="574.00" font-size="11" fill="#444" textLength="33.00" lengthAdjust="spacingAndGlyphs">1#ACP</text><text x="318.50" y="574.80" font-size="13.4" fill="#333" textLength="29.50" lengthAdjust="spacingAndGlyphs">2,115</text><text x="355.20" y="574.80" font-size="13.4" fill="#333" textLength="25.50" lengthAdjust="spacingAndGlyphs">kWh</text><text x="399.00" y="574.80" font-size="13.4" fill="#333" textLength="41.20" lengthAdjust="spacingAndGlyphs">48.82%</text><rect x="242.7" y="588.10" width="10.8" height="6.6" fill="#ebbd48"/><text x="262.70" y="595.60" font-size="11" fill="#444" textLength="33.00" lengthAdjust="spacingAndGlyphs">2#ACP</text><text x="318.50" y="596.40" font-size="13.4" fill="#333" textLength="29.50" lengthAdjust="spacingAndGlyphs">2,217</text><text x="355.20" y="596.40" font-size="13.4" fill="#333" textLength="25.50" lengthAdjust="spacingAndGlyphs">kWh</text><text x="399.00" y="596.40" font-size="13.4" fill="#333" textLength="41.20" lengthAdjust="spacingAndGlyphs">51.18%</text></svg></section><section><div class="card" style="left:554.00px;top:395.00px;width:825.00px;height:269.00px"></div><span class="t " id="t34" style="font-size:14.2px;line-height:18px;top:404.32px;color:#333;-webkit-text-stroke:0.25px #333;left:564.20px;transform:scaleX(1.0144);transform-origin:0 0;">Imbalance rate</span><svg class="chart" style="left:554.00px;top:395.00px" width="825.00" height="269.00" viewBox="554.00 395.00 825.00 269.00"><rect x="665.70" y="448.70" width="620.41" height="91.56" fill="#fdf8ec"/><rect x="665.70" y="555.52" width="620.41" height="45.78" fill="#fbe6e9"/><text x="650.50" y="603.70" font-size="8.3" fill="#8c8c8c" text-anchor="end">0</text><line x1="655.00" x2="1296.80" y1="570.78" y2="570.78" stroke="#f2f2f2" stroke-width="1"/><text x="650.50" y="573.18" font-size="8.3" fill="#8c8c8c" text-anchor="end">20</text><line x1="655.00" x2="1296.80" y1="540.26" y2="540.26" stroke="#f2f2f2" stroke-width="1"/><text x="650.50" y="542.66" font-size="8.3" fill="#8c8c8c" text-anchor="end">40</text><line x1="655.00" x2="1296.80" y1="509.74" y2="509.74" stroke="#f2f2f2" stroke-width="1"/><text x="650.50" y="512.14" font-size="8.3" fill="#8c8c8c" text-anchor="end">60</text><line x1="655.00" x2="1296.80" y1="479.22" y2="479.22" stroke="#f2f2f2" stroke-width="1"/><text x="650.50" y="481.62" font-size="8.3" fill="#8c8c8c" text-anchor="end">80</text><line x1="655.00" x2="1296.80" y1="448.70" y2="448.70" stroke="#f2f2f2" stroke-width="1"/><text x="650.50" y="451.10" font-size="8.3" fill="#8c8c8c" text-anchor="end">100</text><line x1="655.00" x2="1296.80" y1="601.30" y2="601.30" stroke="#e2e2e2" stroke-width="1"/><line x1="665.70" x2="665.70" y1="601.30" y2="604.30" stroke="#e6e6e6" stroke-width="1"/><text x="665.70" y="613.20" font-size="8.3" fill="#8c8c8c" text-anchor="middle" textLength="44.60" lengthAdjust="spacingAndGlyphs">2025/11/26</text><line x1="729.88" x2="729.88" y1="601.30" y2="604.30" stroke="#e6e6e6" stroke-width="1"/><text x="729.88" y="613.20" font-size="8.3" fill="#8c8c8c" text-anchor="middle" textLength="21.70" lengthAdjust="spacingAndGlyphs">11/29</text><line x1="794.06" x2="794.06" y1="601.30" y2="604.30" stroke="#e6e6e6" stroke-width="1"/><text x="794.06" y="613.20" font-size="8.3" fill="#8c8c8c" text-anchor="middle" textLength="21.70" lengthAdjust="spacingAndGlyphs">12/02</text><line x1="858.24" x2="858.24" y1="601.30" y2="604.30" stroke="#e6e6e6" stroke-width="1"/><text x="858.24" y="613.20" font-size="8.3" fill="#8c8c8c" text-anchor="middle" textLength="21.70" lengthAdjust="spacingAndGlyphs">12/05</text><line x1="922.42" x2="922.42" y1="601.30" y2="604.30" stroke="#e6e6e6" stroke-width="1"/><text x="922.42" y="613.20" font-size="8.3" fill="#8c8c8c" text-anchor="middle" textLength="21.70" lengthAdjust="spacingAndGlyphs">12/08</text><line x1="986.60" x2="986.60" y1="601.30" y2="604.30" stroke="#e6e6e6" stroke-width="1"/><text x="986.60" y="613.20" font-size="8.3" fill="#8c8c8c" text-anchor="middle" textLength="21.70" lengthAdjust="spacingAndGlyphs">12/11</text><line x1="1050.78" x2="1050.78" y1="601.30" y2="604.30" stroke="#e6e6e6" stroke-width="1"/><text x="1050.78" y="613.20" font-size="8.3" fill="#8c8c8c" text-anchor="middle" textLength="21.70" lengthAdjust="spacingAndGlyphs">12/14</text><line x1="1114.96" x2="1114.96" y1="601.30" y2="604.30" stroke="#e6e6e6" stroke-width="1"/><text x="1114.96" y="613.20" font-size="8.3" fill="#8c8c8c" text-anchor="middle" textLength="21.70" lengthAdjust="spacingAndGlyphs">12/17</text><line x1="1179.14" x2="1179.14" y1="601.30" y2="604.30" stroke="#e6e6e6" stroke-width="1"/><text x="1179.14" y="613.20" font-size="8.3" fill="#8c8c8c" text-anchor="middle" textLength="21.70" lengthAdjust="spacingAndGlyphs">12/20</text><line x1="1243.32" x2="1243.32" y1="601.30" y2="604.30" stroke="#e6e6e6" stroke-width="1"/><text x="1243.32" y="613.20" font-size="8.3" fill="#8c8c8c" text-anchor="middle" textLength="21.70" lengthAdjust="spacingAndGlyphs">12/23</text><text x="650.00" y="435.90" font-size="8.3" fill="#8c8c8c" text-anchor="middle" textLength="12.70" lengthAdjust="spacingAndGlyphs">(%)</text><line x1="665.70" x2="1286.10" y1="540.26" y2="540.26" stroke="#edbf45" stroke-width="1.3"/><line x1="665.70" x2="1286.10" y1="555.52" y2="555.52" stroke="#dc3545" stroke-width="1.3"/><path d="M665.70 601.30 L687.09 601.30 L708.48 601.30 L729.88 601.30 L751.27 601.30 L772.66 601.30 L794.06 532.50 L815.45 601.30 L836.84 534.70 L858.24 533.30 L879.63 601.30 L901.02 601.30 L922.42 601.30 L943.81 601.30 L965.20 530.50 L986.60 529.50 L1007.99 601.30 L1029.38 601.30 L1050.78 601.30 L1072.17 601.30 L1093.56 532.30 L1114.96 601.30 L1136.35 601.30 L1157.74 601.30 L1179.14 601.30 L1200.53 601.30 L1221.92 601.30 L1243.32 601.30 L1264.71 601.30 L1286.10 601.30" fill="none" stroke="#19be19" stroke-width="1.5" stroke-linejoin="bevel"/><rect x="857.40" y="646.8" width="11.60" height="2.2" rx="1" fill="#edbf45"/><text x="877.00" y="650.20" font-size="8.2" fill="#444" textLength="43.00" lengthAdjust="spacingAndGlyphs">Upper limit</text><rect x="933.60" y="646.8" width="11.90" height="2.2" rx="1" fill="#dc3545"/><text x="952.70" y="650.20" font-size="8.2" fill="#444" textLength="42.30" lengthAdjust="spacingAndGlyphs">Lower limit</text><rect x="1008.80" y="646.8" width="11.20" height="2.2" rx="1" fill="#19be19"/><text x="1027.70" y="650.20" font-size="8.2" fill="#444" textLength="46.80" lengthAdjust="spacingAndGlyphs">Actual value</text></svg></section>
</body></html>
